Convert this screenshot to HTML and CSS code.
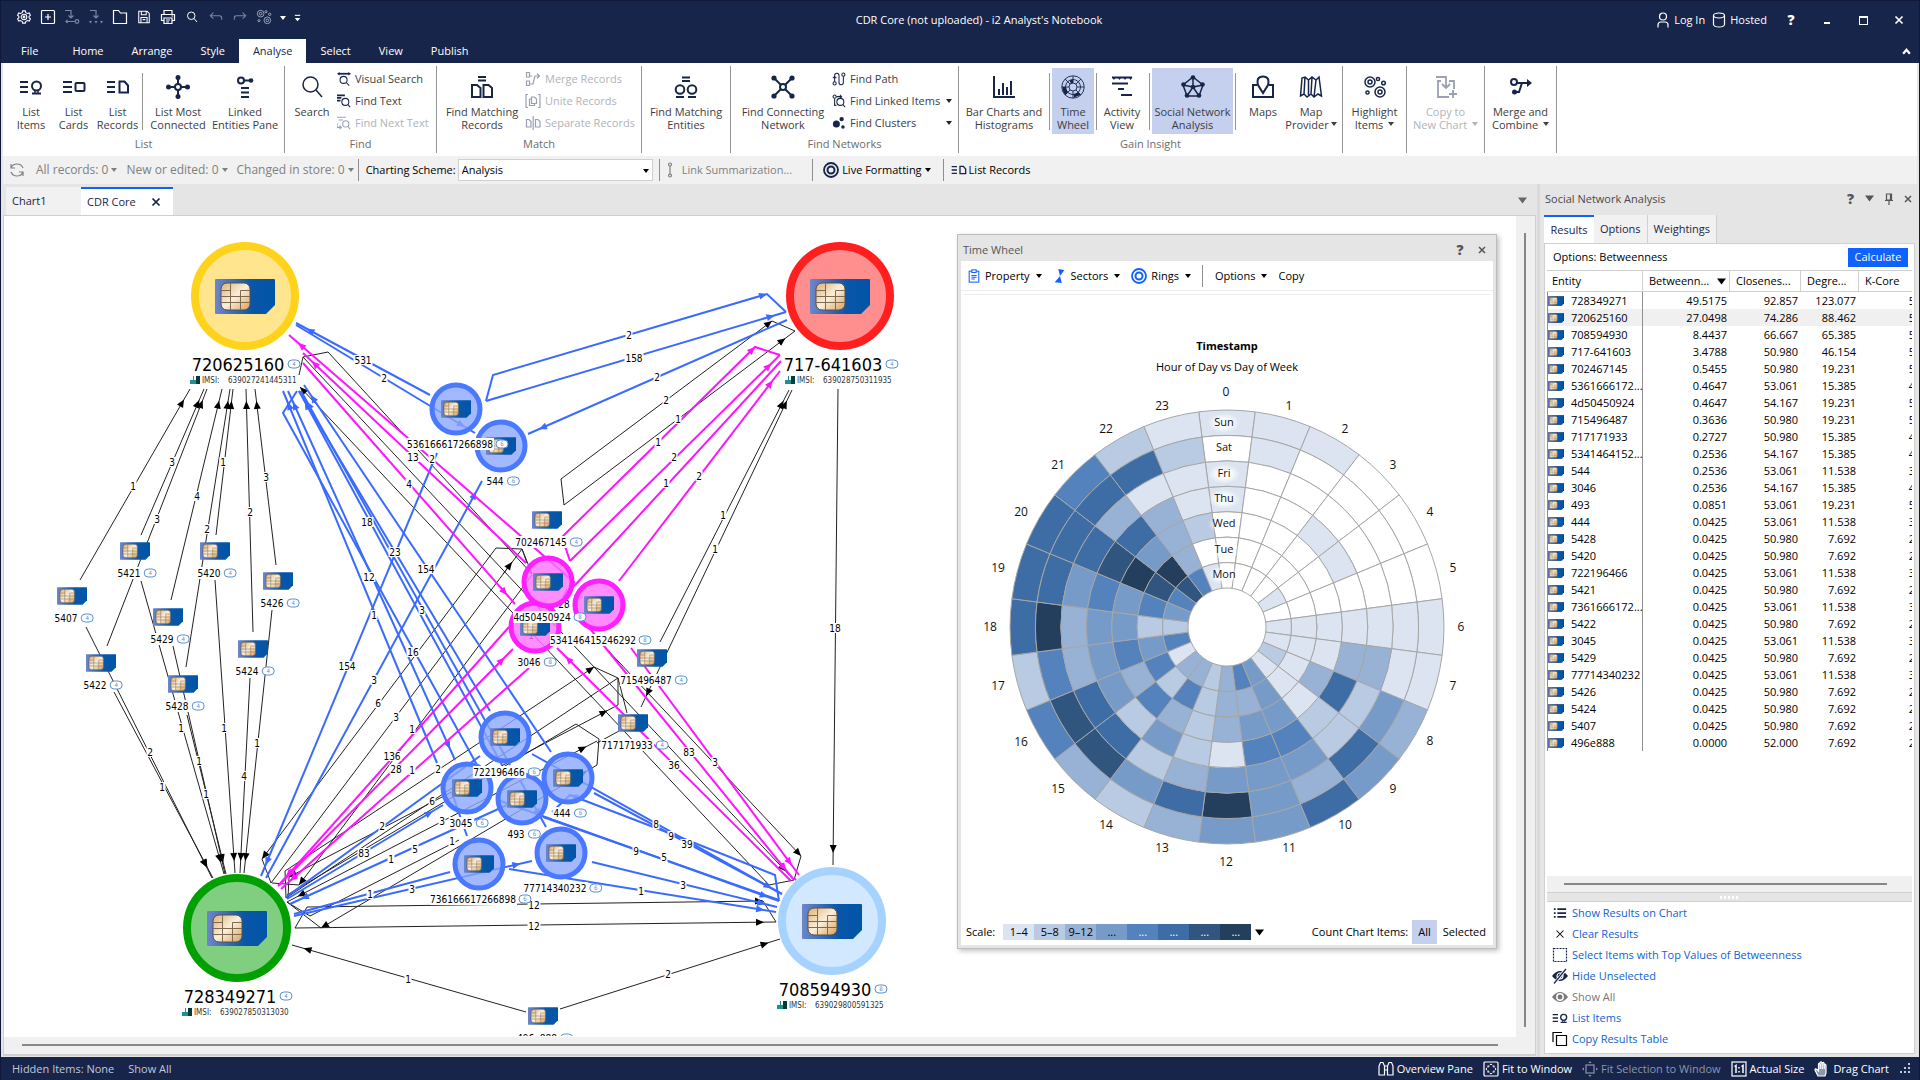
FILE: index.html
```html
<!DOCTYPE html>
<html lang="en">
<head>
<meta charset="utf-8">
<title>CDR Core (not uploaded) - i2 Analyst's Notebook</title>
<link rel="stylesheet" href="styles.css">
</head>
<body>
<svg class="defs" aria-hidden="true">
  <defs>
    <linearGradient id="simBody" x1="0" x2="1" y1="0" y2="0"><stop offset="0" stop-color="#6f86cb"/><stop offset=".6" stop-color="#0a56a8"/><stop offset="1" stop-color="#0055a8"/></linearGradient>
    <linearGradient id="simChip" x1="0" x2="1" y1="0" y2="1"><stop offset="0" stop-color="#e0b070"/><stop offset=".5" stop-color="#fbeedb"/><stop offset="1" stop-color="#d79f58"/></linearGradient>
    <symbol id="sim" viewBox="0 0 60 35"><path d="M0 1Q0 0 1 0H59Q60 0 60 1V26L51 35H1Q0 35 0 34Z" fill="url(#simBody)"/><rect x="6" y="4" width="29" height="27" rx="6" fill="url(#simChip)" stroke="#5c5040" stroke-width="1"/><path d="M6 11.500H15.500M6 17.500H35M6 23.500H35M15.500 4V31M25.500 11.500H35M25.500 11.500V31" fill="none" stroke="#7d6a50" stroke-width="1"/></symbol>
    <radialGradient id="glow"><stop offset="0" stop-color="#fff"/><stop offset=".5" stop-color="#fff" stop-opacity=".8"/><stop offset="1" stop-color="#fff" stop-opacity="0"/></radialGradient>
  </defs>
  <symbol id="caret" viewBox="0 0 6 4"><path d="M0 0H6L3 4Z" fill="currentColor" stroke="none"/></symbol>
  <symbol id="chevron" viewBox="0 0 8 8"><path d="M1 6 4 2.500 7 6" stroke-width="2"/></symbol>
  <symbol id="gear" viewBox="0 0 16 16"><path d="M6.500 1H9.500L10 3 12 4 14 3.400 15.300 6 13.800 7.400V8.800L15.300 10.200 14 12.700 12 12 10 13.200 9.500 15H6.500L6 13.200 4 12 2 12.700.7 10.200 2.200 8.800V7.400L.7 6 2 3.400 4 4 6 3Z"/><circle cx="8" cy="8" r="3.200"/><circle cx="8" cy="8" r="1"/></symbol>
  <symbol id="newdoc" viewBox="0 0 16 16"><rect x="1.500" y="1.500" width="13" height="13" rx="1"/><path d="M8 5V11M5 8H11"/></symbol>
  <symbol id="imp1" viewBox="0 0 16 16"><path d="M1 1.500H7V9M4.500 6.500 7 9 9.500 6.500M2 12.500H11M3.500 11 2 12.500 3.500 14"/><circle cx="13" cy="12.500" r="1.800"/></symbol>
  <symbol id="imp2" viewBox="0 0 16 16"><path d="M2 1.500H8V9M5.500 6.500 8 9 10.500 6.500"/><path d="M1 12H4L2.500 14.500ZM6.500 12H9.500L8 14.500ZM12 12H15L13.500 14.500Z" fill="currentColor" stroke="none"/></symbol>
  <symbol id="folder" viewBox="0 0 16 16"><path d="M1.500 14.500V1.500H6.500L8.500 4H14.500V14.500Z"/></symbol>
  <symbol id="save" viewBox="0 0 16 16"><path d="M2 1.500H11.500L14 4V14.500H2ZM5 1.500V5.500H10.500V1.500M4.500 14.500V8.500H11.500V14.500M6.500 11H9.500"/></symbol>
  <symbol id="print" viewBox="0 0 16 16"><path d="M4 5V1.500H12V5M4 11.500H1.500V5.500H14.500V11.500H12M4 9H12V14.500H4ZM6 11H10M6 13H9M11.500 7H13"/></symbol>
  <symbol id="lens" viewBox="0 0 24 24"><circle cx="10.500" cy="9.500" r="7.500"/><path d="M16 15 22 22"/></symbol>
  <symbol id="undo" viewBox="0 0 16 16"><path d="M5 3 1.500 6.500 5 10M1.500 6.500H12Q14.500 6.500 14.500 9V11"/></symbol>
  <symbol id="redo" viewBox="0 0 16 16"><path d="M11 3 14.500 6.500 11 10M14.500 6.500H4Q1.500 6.500 1.500 9V11"/></symbol>
  <symbol id="hilite" viewBox="0 0 24 24"><circle cx="7" cy="7" r="5"/><circle cx="7" cy="7" r="2"/><circle cx="17" cy="17" r="5"/><circle cx="17" cy="17" r="2"/><circle cx="15" cy="4" r="1.600"/><circle cx="20.500" cy="8" r="1.800"/><circle cx="4.500" cy="17.500" r="1.600"/></symbol>
  <symbol id="more" viewBox="0 0 8 10"><path d="M1 1.500H7"/><path d="M1 4.500H7L4 8Z" fill="currentColor" stroke="none"/></symbol>
  <symbol id="user" viewBox="0 0 14 16"><circle cx="7" cy="4.500" r="3.500"/><path d="M2 15.500V13Q2 10 5 10H9Q12 10 12 13V15.500"/></symbol>
  <symbol id="disk" viewBox="0 0 14 16"><ellipse cx="7" cy="3.500" rx="5.500" ry="2.500"/><path d="M1.500 3.500V12.500Q2 15 7 15T12.500 12.500V3.500"/></symbol>
  <symbol id="litems" viewBox="0 0 24 24"><path d="M1 7H9M1 12H9M1 17H9M13 18.500H22" stroke-width="2"/><circle cx="17.500" cy="11" r="4.500" stroke-width="2"/><path d="M16 15.500V18M19 15.500V18"/></symbol>
  <symbol id="lcards" viewBox="0 0 24 24"><path d="M1 7H10M1 12H10M1 17H10" stroke-width="2"/><rect x="13.500" y="8" width="9" height="8" rx="1" stroke-width="2"/></symbol>
  <symbol id="lrecs" viewBox="0 0 24 24"><path d="M1 7H9M1 12H9M1 17H9M13.500 6.500H18.500L22 10.500V17.500H13.500Z" stroke-width="2"/></symbol>
  <symbol id="most" viewBox="0 0 24 24"><circle cx="12" cy="12" r="3" stroke-width="2"/><path d="M12 3V9M12 15V21M3 12H9M15 12H21" stroke-width="2"/><g fill="currentColor" stroke="none"><circle cx="12" cy="2.500" r="2.500"/><circle cx="12" cy="21.500" r="2.500"/><circle cx="2.500" cy="12" r="2.500"/><circle cx="21.500" cy="12" r="2.500"/></g></symbol>
  <symbol id="linked" viewBox="0 0 24 24"><circle cx="8" cy="5.500" r="3" stroke-width="2"/><path d="M11 5.500H17M8 13H16M8 17.500H16M8 22H16" stroke-width="2"/><circle cx="18" cy="5.500" r="2.300" fill="currentColor" stroke="none"/></symbol>
  <symbol id="vsearch" viewBox="0 0 16 16"><path d="M2 2H14" stroke-width="2"/><circle cx="7.500" cy="9" r="4"/><path d="M10.500 12 14 15.500"/><path d="M0 2 3 0V4ZM16 2 13 0V4Z" fill="currentColor" stroke="none"/></symbol>
  <symbol id="ftext" viewBox="0 0 16 16"><path d="M0 1.500H9M0 4.500H5M0 7.500H4" stroke-width="2"/><circle cx="9.500" cy="9" r="4"/><path d="M12.500 12 15 15"/></symbol>
  <symbol id="fnext" viewBox="0 0 16 16"><path d="M0 1.500H10M2 4.500H7M0 8V13H5M3 11 5 13 3 15"/><circle cx="10" cy="9" r="3.500"/><path d="M12.500 12 15 15"/></symbol>
  <symbol id="mrecs" viewBox="0 0 24 24"><path d="M8 2H16M8 5.500H16M2 10H7L10.500 13V22H2ZM13.500 10H18.500L22 13V22H13.500Z" stroke-width="2"/></symbol>
  <symbol id="ments" viewBox="0 0 24 24"><path d="M8 2.500H16M8 6H16M2 22H10M14 22H22" stroke-width="2"/><circle cx="6" cy="14.500" r="4.300" stroke-width="2"/><circle cx="18" cy="14.500" r="4.300" stroke-width="2"/></symbol>
  <symbol id="merge" viewBox="0 0 16 16"><path d="M1.500 1.500H4.500V6H1.500ZM1.500 10H4.500V14.500H1.500ZM5 13H8L10 5H14M5 5H7M12 2.500 14.500 5 12 7.500"/></symbol>
  <symbol id="unite" viewBox="0 0 16 16"><path d="M3 1.500H1V14.500H3M13 1.500H15V14.500H13M6.500 4H9.500L11.500 6V10.500H6.500ZM6.500 6H4.500V12.500H9.500V10.500"/></symbol>
  <symbol id="separate" viewBox="0 0 16 16"><path d="M1.500 4.500H4L6 6.500V12H1.500ZM10.500 4.500H13L15 6.500V12H10.500ZM8.200 1V15"/></symbol>
  <symbol id="connect" viewBox="0 0 24 24"><circle cx="12" cy="12" r="3" stroke-width="2"/><path d="M3 3 10 10M21 3 14 10M3 21 10 14M21 21 14 14" stroke-width="2"/><g fill="currentColor" stroke="none"><circle cx="3" cy="3" r="2.600"/><circle cx="21" cy="3" r="2.600"/><circle cx="3" cy="21" r="2.600"/><circle cx="21" cy="21" r="2.600"/></g></symbol>
  <symbol id="path" viewBox="0 0 16 16"><circle cx="3" cy="13" r="1.800"/><circle cx="13" cy="3" r="1.800"/><path d="M3 11V4Q3 1.500 5.500 1.500T8 4V12Q8 14.500 10.500 14.500T13 12V5M1 7 3 5 5 7"/></symbol>
  <symbol id="flinked" viewBox="0 0 16 16"><circle cx="3" cy="3" r="1.800"/><circle cx="9.500" cy="9" r="4"/><path d="M12.500 12 15 15M5 3H11M9 1 11 3 9 5M3 5V13H5"/></symbol>
  <symbol id="clusters" viewBox="0 0 16 16"><g fill="currentColor" stroke="none"><circle cx="5" cy="9" r="4"/><circle cx="11" cy="3.500" r="2.500"/><circle cx="12.500" cy="12.500" r="2"/></g></symbol>
  <symbol id="bars" viewBox="0 0 24 24"><path d="M2 1V22H23" stroke-width="2"/><path d="M7 20V14M11 20V8M15 20V12M19 20V6" stroke-width="2"/></symbol>
  <symbol id="wheel" viewBox="0 0 24 24"><g stroke-width=".9"><circle cx="12" cy="12" r="11.200"/><circle cx="12" cy="12" r="7.500"/><circle cx="12" cy="12" r="4"/><path d="M12 1V8M12 16V23M1 12H8M16 12H23M4 4 9 9M15 15 20 20M20 4 15 9M9 15 4 20"/></g><path d="M8.500 5.500 12 4.500V8L10 8.500ZM1.500 12H4.500L7 17.500 4.500 20Q1.500 17 1.500 12ZM12.500 19.500 17.500 17 19.500 20 13 22.500Z" fill="currentColor" stroke="none"/></symbol>
  <symbol id="activity" viewBox="0 0 24 24"><path d="M2 8.500H18M8 14H14M11 20H22M2 2.500H22" stroke-width="2"/><path d="M2 2H6L4 5ZM7.500 2H11.500L9.500 5ZM13 2H17L15 5ZM18.500 2H22.500L20.500 5Z" fill="currentColor" stroke="none"/></symbol>
  <symbol id="social" viewBox="0 0 24 24"><path d="M12 2 22 10 18 21H6L2 10ZM12 2V12L22 10M12 12 18 21M12 12 6 21M12 12 2 10"/><g fill="currentColor" stroke="none"><circle cx="12" cy="2.500" r="2.300"/><circle cx="21.500" cy="9.500" r="2.300"/><circle cx="18" cy="20.500" r="2.300"/><circle cx="6" cy="20.500" r="2.300"/><circle cx="2.500" cy="9.500" r="2.300"/><circle cx="12" cy="12" r="2.300"/></g></symbol>
  <symbol id="maps" viewBox="0 0 24 24"><path d="M12 18 7 10Q5 1.500 12 1.500T17 10ZM6 10H2V22H22V10H18" stroke-width="2"/></symbol>
  <symbol id="mapprov" viewBox="0 0 24 24"><path d="M1.500 21 3 3 6 2 9.500 5 13 2 17 5 20 2 22.500 21 19 19 15 22 12 19 8 22 5 19ZM6 2 5 19M9.500 5V21M13 2 12 19M17 5 15 22" stroke-width="1.500"/></symbol>
  <symbol id="copynew" viewBox="0 0 24 24"><path d="M2 2H12V13M8 9 12 13 16 9M7 6H4V22H15M15 6H20V14M19 15V23M15 19H23" stroke-width="1.800"/></symbol>
  <symbol id="combine" viewBox="0 0 24 24"><circle cx="5" cy="7" r="3" stroke-width="2"/><path d="M8 8H21M7 17H10L13 8" stroke-width="2"/><path d="M18 4 23 8 18 12Z" fill="currentColor" stroke="none"/><circle cx="5.500" cy="17" r="2.500" fill="currentColor" stroke="none"/></symbol>
  <symbol id="refresh" viewBox="0 0 16 16"><path d="M2 6Q3.500 2 8 2T14 6M2 2V6H6M14 10Q12.500 14 8 14T2 10M14 14V10H10"/></symbol>
  <symbol id="linksum" viewBox="0 0 6 16"><circle cx="3" cy="2.500" r="1.500"/><path d="M3 4V13"/><circle cx="3" cy="13.500" r="1.500"/></symbol>
  <symbol id="target" viewBox="0 0 16 16"><circle cx="8" cy="8" r="7" stroke-width="1.800"/><circle cx="8" cy="8" r="3.500" stroke-width="2"/></symbol>
  <symbol id="pin" viewBox="0 0 12 12"><path d="M3.500 1H8.500V7H3.500ZM7.500 1V7M2 7.500H10M6 8V12"/></symbol>
  <symbol id="clip" viewBox="0 0 14 16"><rect x="1.500" y="2.500" width="11" height="12.500"/><rect x="4.500" y="1" width="5" height="3" fill="#fff"/><path d="M4 7.500H10M4 9.500H10M4 11.500H8"/></symbol>
  <symbol id="sector" viewBox="0 0 14 16"><path d="M5 0 12 1 7 8 9 16 1 15 7 8Z" fill="currentColor" stroke="none"/></symbol>
  <symbol id="results" viewBox="0 0 16 16"><path d="M1 3.500H3M5 3.500H15M1 8H3M5 8H15M1 12.500H3M5 12.500H15" stroke-width="2"/></symbol>
  <symbol id="cross" viewBox="0 0 16 16"><path d="M4 4 12 12M12 4 4 12"/></symbol>
  <symbol id="marquee" viewBox="0 0 16 16"><rect x="1.500" y="1.500" width="13" height="13" stroke-dasharray="2 1"/></symbol>
  <symbol id="hide" viewBox="0 0 16 16"><path d="M0 8Q8-2 16 8 8 18 0 8Z" fill="currentColor" stroke="none"/><circle cx="8" cy="8" r="3" fill="none" stroke="#fff"/><path d="M2 16 14 1" stroke="#fff" stroke-width="3"/><path d="M2 15.500 14 1"/></symbol>
  <symbol id="eye" viewBox="0 0 16 16"><path d="M0 8Q8-2 16 8 8 18 0 8Z" fill="currentColor" stroke="none"/><circle cx="8" cy="8" r="3.200" fill="none" stroke="#fff" stroke-width="1.500"/></symbol>
  <symbol id="copy" viewBox="0 0 16 16"><path d="M1 11V1.500H10M4.500 4.500H14.500V14.500H4.500Z"/></symbol>
  <symbol id="binoc" viewBox="0 0 16 16"><path d="M1 14V5L2.500 1.500H5L6.500 5V14ZM9.500 14V5L11 1.500H13.500L15 5V14ZM6.500 5H9.500M6.500 9H9.500"/></symbol>
  <symbol id="fitwin" viewBox="0 0 16 16"><rect x="1" y="1" width="14" height="14" rx="1"/><path d="M5 6.500V5H6.500M9.500 5H11V6.500M11 9.500V11H9.500M6.500 11H5V9.500"/><path d="M8 2.500 9.500 4H6.500ZM8 13.500 9.500 12H6.500ZM2.500 8 4 6.500V9.500ZM13.500 8 12 6.500V9.500Z" fill="currentColor" stroke="none"/></symbol>
  <symbol id="fitsel" viewBox="0 0 16 16"><rect x="4" y="4" width="8" height="8"/><path d="M8 0 9.500 2H6.500ZM8 16 9.500 14H6.500ZM0 8 2 6.500V9.500ZM16 8 14 6.500V9.500Z" fill="currentColor" stroke="none"/></symbol>
  <symbol id="actual" viewBox="0 0 16 16"><rect x="1" y="1" width="14" height="14"/><path d="M3.500 5.500 5 4.500V12M10.500 5.500 12 4.500V12M8 6V7.500M8 10V11.500" stroke-width="1.500"/></symbol>
  <symbol id="hand" viewBox="0 0 16 16"><path d="M4 15 1 9Q1 7 3 8.500L4.500 10V3Q5 1.500 6 3V1.500Q7 0 8 1.500V2Q9.500.5 10 2.500V3.500Q11.500 2.500 12 4.500V12L11 15Z" fill="#8d96ad"/><path d="M6.200 3V8M8.200 2V8M10.200 3.500V8"/></symbol>
  <symbol id="grip" viewBox="0 0 12 12"><path d="M9 0H11V2H9ZM9 4H11V6H9ZM9 8H11V10H9ZM5 4H7V6H5ZM5 8H7V10H5ZM1 8H3V10H1Z" fill="currentColor" stroke="none"/></symbol>
</svg>

<header class="titlebar">
  <div class="title-row">
    <div class="qat">
      <button class="qbtn" aria-label="Settings"><svg class="i14"><use href="#gear"/></svg></button>
      <button class="qbtn" aria-label="New"><svg class="i16"><use href="#newdoc"/></svg></button>
      <button class="qbtn dim" aria-label="Import links"><svg class="i16"><use href="#imp1"/></svg></button>
      <button class="qbtn dim" aria-label="Import items"><svg class="i16"><use href="#imp2"/></svg></button>
      <button class="qbtn" aria-label="Open"><svg class="i16"><use href="#folder"/></svg></button>
      <button class="qbtn" aria-label="Save"><svg class="i14"><use href="#save"/></svg></button>
      <button class="qbtn" aria-label="Print"><svg class="i16"><use href="#print"/></svg></button>
      <button class="qbtn" aria-label="Search"><svg class="i12 thick2"><use href="#lens"/></svg></button>
      <button class="qbtn dim" aria-label="Undo"><svg class="i14"><use href="#undo"/></svg></button>
      <button class="qbtn dim" aria-label="Redo"><svg class="i14"><use href="#redo"/></svg></button>
      <button class="qbtn soft" aria-label="Highlight"><svg class="i16"><use href="#hilite"/></svg></button>
      <button class="qbtn slim" aria-label="Highlight options"><svg class="i6"><use href="#caret"/></svg></button>
      <button class="qbtn slim" aria-label="Customise"><svg class="i8"><use href="#more"/></svg></button>
    </div>
    <h1 class="app-title">CDR Core (not uploaded) - i2 Analyst's Notebook</h1>
    <div class="win-tools">
      <button class="wtext"><svg class="i16"><use href="#user"/></svg>Log In</button>
      <button class="wtext"><svg class="i16"><use href="#disk"/></svg>Hosted</button>
      <button class="wbtn bold">?</button>
      <button class="wbtn" aria-label="Minimise"><span class="g-min"></span></button>
      <button class="wbtn" aria-label="Maximise"><span class="g-max"></span></button>
      <button class="wbtn" aria-label="Close"><svg class="i14 thick2"><use href="#cross"/></svg></button>
    </div>
  </div>
  <nav class="menu">
    <button class="mtab first">File</button><button class="mtab">Home</button><button class="mtab">Arrange</button><button class="mtab">Style</button><button class="mtab on">Analyse</button><button class="mtab">Select</button><button class="mtab">View</button><button class="mtab">Publish</button>
    <button class="collapse" aria-label="Collapse ribbon"><svg class="i8"><use href="#chevron"/></svg></button>
  </nav>
</header>

<section class="ribbon">
  <div class="grp g-list"><div class="tools">
    <button class="big"><svg class="i24"><use href="#litems"/></svg><span>List<br>Items</span></button>
    <button class="big"><svg class="i24"><use href="#lcards"/></svg><span>List<br>Cards</span></button>
    <button class="big"><svg class="i24"><use href="#lrecs"/></svg><span>List<br>Records</span></button>
    <i class="rsep"></i>
    <button class="big"><svg class="i24"><use href="#most"/></svg><span>List Most<br>Connected</span></button>
    <button class="big"><svg class="i24"><use href="#linked"/></svg><span>Linked<br>Entities Pane</span></button>
  </div><h2>List</h2></div>
  <div class="grp g-find"><div class="tools">
    <button class="big"><svg class="i24"><use href="#lens"/></svg><span>Search</span></button>
    <div class="smalls">
      <button class="small"><svg class="i14"><use href="#vsearch"/></svg>Visual Search</button>
      <button class="small"><svg class="i14"><use href="#ftext"/></svg>Find Text</button>
      <button class="small" disabled><svg class="i14"><use href="#fnext"/></svg>Find Next Text</button>
    </div>
  </div><h2>Find</h2></div>
  <div class="grp g-match"><div class="tools">
    <button class="big"><svg class="i24"><use href="#mrecs"/></svg><span>Find Matching<br>Records</span></button>
    <div class="smalls">
      <button class="small" disabled><svg class="i16"><use href="#merge"/></svg>Merge Records</button>
      <button class="small" disabled><svg class="i16"><use href="#unite"/></svg>Unite Records</button>
      <button class="small" disabled><svg class="i16"><use href="#separate"/></svg>Separate Records</button>
    </div>
  </div><h2>Match</h2></div>
  <div class="grp g-ents"><div class="tools">
    <button class="big"><svg class="i24"><use href="#ments"/></svg><span>Find Matching<br>Entities</span></button>
  </div></div>
  <div class="grp g-net"><div class="tools">
    <button class="big"><svg class="i24"><use href="#connect"/></svg><span>Find Connecting<br>Network</span></button>
    <div class="smalls">
      <button class="small"><svg class="i14"><use href="#path"/></svg>Find Path</button>
      <button class="small"><svg class="i14"><use href="#flinked"/></svg>Find Linked Items<svg class="i6 push"><use href="#caret"/></svg></button>
      <button class="small"><svg class="i14"><use href="#clusters"/></svg>Find Clusters<svg class="i6 push"><use href="#caret"/></svg></button>
    </div>
  </div><h2>Find Networks</h2></div>
  <div class="grp g-gain"><div class="tools">
    <button class="big"><svg class="i24"><use href="#bars"/></svg><span>Bar Charts and<br>Histograms</span></button>
    <i class="rsep"></i>
    <button class="big on"><svg class="i24"><use href="#wheel"/></svg><span>Time<br>Wheel</span></button>
    <i class="rsep"></i>
    <button class="big"><svg class="i24"><use href="#activity"/></svg><span>Activity<br>View</span></button>
    <i class="rsep"></i>
    <button class="big on"><svg class="i24"><use href="#social"/></svg><span>Social Network<br>Analysis</span></button>
    <i class="rsep"></i>
    <button class="big"><svg class="i24"><use href="#maps"/></svg><span>Maps</span></button>
    <button class="big"><svg class="i24"><use href="#mapprov"/></svg><span>Map<br>Provider<svg class="i6 in"><use href="#caret"/></svg></span></button>
  </div><h2>Gain Insight</h2></div>
  <div class="grp g-hi"><div class="tools"><button class="big"><svg class="i24"><use href="#hilite"/></svg><span>Highlight<br>Items <svg class="i6 in"><use href="#caret"/></svg></span></button></div></div>
  <div class="grp g-copy"><div class="tools"><button class="big" disabled><svg class="i24"><use href="#copynew"/></svg><span>Copy to<br>New Chart <svg class="i6 in"><use href="#caret"/></svg></span></button></div></div>
  <div class="grp g-merge"><div class="tools"><button class="big"><svg class="i24"><use href="#combine"/></svg><span>Merge and<br>Combine <svg class="i6 in"><use href="#caret"/></svg></span></button></div></div>
</section>

<section class="recordbar">
  <button class="rb grey r-ref" aria-label="Refresh"><svg class="i16"><use href="#refresh"/></svg></button>
  <button class="rb grey wide">All records: 0<svg class="i6"><use href="#caret"/></svg></button>
  <button class="rb grey wide">New or edited: 0<svg class="i6"><use href="#caret"/></svg></button>
  <button class="rb grey wide r-chg">Changed in store: 0<svg class="i6"><use href="#caret"/></svg></button>
  <i class="tsep"></i>
  <label class="rlabel" for="scheme">Charting Scheme:</label>
  <span class="selwrap"><select id="scheme"><option>Analysis</option></select><svg class="i6"><use href="#caret"/></svg></span>
  <i class="tsep"></i>
  <button class="rb grey r-sum"><svg class="i16 narrow"><use href="#linksum"/></svg>Link Summarization...</button>
  <i class="tsep"></i>
  <button class="rb r-live"><svg class="i16 navy"><use href="#target"/></svg>Live Formatting<svg class="i6"><use href="#caret"/></svg></button>
  <i class="tsep"></i>
  <button class="rb r-rec"><svg class="i16 navy"><use href="#lrecs"/></svg>List Records</button>
</section>

<main class="work">
  <section class="docs">
    <div class="doctabs">
      <button class="dtab">Chart1</button>
      <button class="dtab on">CDR Core<svg class="i14 thick2"><use href="#cross"/></svg></button>
      <button class="dmenu" aria-label="Open charts"><svg class="i8"><use href="#caret"/></svg></button>
    </div>
    <div class="chart">
      <div class="canvas">
        <svg class="graph" id="graph" width="1512" height="820" viewBox="4 216 1512 820" role="img" aria-label="Call record link chart"></svg>
        <section class="wheelwin">
          <div class="wtitle"><span>Time Wheel</span><button class="pbtn bold">?</button><button class="pbtn" aria-label="Close"><svg class="i12 thick2"><use href="#cross"/></svg></button></div>
          <div class="wbody">
            <div class="wtools">
              <button class="wt"><svg class="i14 blue"><use href="#clip"/></svg>Property<svg class="i6"><use href="#caret"/></svg></button>
              <button class="wt"><svg class="i14 blue"><use href="#sector"/></svg>Sectors<svg class="i6"><use href="#caret"/></svg></button>
              <button class="wt"><svg class="i16 blue"><use href="#target"/></svg>Rings<svg class="i6"><use href="#caret"/></svg></button>
              <i class="tsep"></i>
              <button class="wt">Options<svg class="i6"><use href="#caret"/></svg></button>
              <button class="wt">Copy</button>
            </div>
            <div class="wchart">
              <h3>Timestamp</h3>
              <p>Hour of Day vs Day of Week</p>
              <svg id="wheelplot" width="500" height="500" viewBox="-250 -250 500 500" role="img" aria-label="Hour of day against day of week"></svg>
            </div>
            <div class="wfoot">
              <span class="flabel">Scale:</span>
              <ol class="scale"><li class="s1">1–4</li><li class="s2">5–8</li><li class="s3">9–12</li><li class="s4">...</li><li class="s5">...</li><li class="s6">...</li><li class="s7">...</li><li class="s8">...</li></ol>
              <button class="pbtn slimb" aria-label="Scale options"><svg class="i8"><use href="#caret"/></svg></button>
              <span class="flabel push">Count Chart Items:</span>
              <button class="fopt on">All</button><button class="fopt">Selected</button>
            </div>
          </div>
        </section>
      </div>
      <div class="vscroll"><i></i></div>
      <div class="hscroll"><i></i></div>
    </div>
  </section>

  <aside class="sna">
    <div class="ptitle"><h2>Social Network Analysis</h2><button class="pbtn bold">?</button><button class="pbtn" aria-label="Menu"><svg class="i8"><use href="#caret"/></svg></button><button class="pbtn" aria-label="Pin"><svg class="i12"><use href="#pin"/></svg></button><button class="pbtn" aria-label="Close"><svg class="i12 thick2"><use href="#cross"/></svg></button></div>
    <div class="ptabs"><button class="ptab on">Results</button><button class="ptab">Options</button><button class="ptab">Weightings</button></div>
    <div class="pbody">
      <div class="prow"><span>Options: Betweenness</span><button class="calc">Calculate</button></div>
      <div class="tablebox">
        <table class="res">
          <colgroup><col class="c1"><col class="c2"><col class="c3"><col class="c4"><col class="c5"></colgroup>
          <thead><tr><th>Entity</th><th class="sorted">Betweenn...<svg class="i8"><use href="#caret"/></svg></th><th>Closenes...</th><th>Degre...</th><th>K-Core</th></tr></thead>
          <tbody id="rows"></tbody>
        </table>
      </div>
      <div class="phscroll"><i></i></div>
      <div class="split"><i></i></div>
      <ul class="links">
        <li><svg class="i14 navy"><use href="#results"/></svg><a href="#">Show Results on Chart</a></li>
        <li><svg class="i14"><use href="#cross"/></svg><a href="#">Clear Results</a></li>
        <li><svg class="i16 navy"><use href="#marquee"/></svg><a href="#">Select Items with Top Values of Betweenness</a></li>
        <li><svg class="i16 navy"><use href="#hide"/></svg><a href="#">Hide Unselected</a></li>
        <li class="off"><svg class="i16"><use href="#eye"/></svg><span>Show All</span></li>
        <li><svg class="i16 navy"><use href="#litems"/></svg><a href="#">List Items</a></li>
        <li><svg class="i16"><use href="#copy"/></svg><a href="#">Copy Results Table</a></li>
      </ul>
    </div>
  </aside>
</main>

<footer class="status">
  <span>Hidden Items: None</span><button class="sb plain">Show All</button>
  <div class="sright">
    <button class="sb lit"><svg class="i16"><use href="#binoc"/></svg>Overview Pane</button>
    <button class="sb lit"><svg class="i16"><use href="#fitwin"/></svg>Fit to Window</button>
    <button class="sb" disabled><svg class="i16"><use href="#fitsel"/></svg>Fit Selection to Window</button>
    <button class="sb lit"><svg class="i16"><use href="#actual"/></svg>Actual Size</button>
    <button class="sb lit"><svg class="i16"><use href="#hand"/></svg>Drag Chart</button>
    <svg class="i12 grip"><use href="#grip"/></svg>
  </div>
</footer>
<script src="app.js"></script>
</body>
</html>
```
FILE: styles.css
```css
* { box-sizing: border-box; }
body { margin: 0; height: 100vh; display: flex; flex-direction: column; border: solid #10193a; border-width: 0 1px; font: 11px/14px "Open Sans", "Noto Sans", sans-serif; color: #000; background: #e5e5e5; overflow: hidden; }
button { font: inherit; color: inherit; background: none; border: 0; padding: 0; margin: 0; white-space: nowrap; }
h1, h2, h3, p, ul, ol { margin: 0; padding: 0; font: inherit; }
ul, ol { list-style: none; }
.defs { position: absolute; width: 0; height: 0; }
svg { flex: none; fill: none; stroke: currentColor; stroke-width: 1.2; }
.i6 { width: 6px; height: 6px; stroke: none; }
.i8 { width: 9px; height: 9px; }
.i12 { width: 12px; height: 12px; }
.i14 { width: 14px; height: 14px; }
.i16 { width: 16px; height: 16px; }
.i24 { width: 24px; height: 24px; }
.narrow { width: 6px; }
.thick2 { stroke-width: 2; }
.blue { color: #1062ff; }
.navy { color: #18254a; }
.push { margin-left: auto; }
.bold { font-weight: 800; font-size: 14px; }

.titlebar { background: #18254a; color: #fff; border-top: 1px solid #10193a; }
.title-row { height: 38px; display: grid; grid-template-columns: 1fr auto 1fr; align-items: center; }
.qat { display: flex; padding: 0 0 6px 11px; }
.qbtn { width: 24px; height: 20px; display: flex; align-items: center; justify-content: center; }
.qbtn.slim { width: 14px; padding-top: 2px; }
.dim { color: #7c87a3; }
.soft { color: #b4bccd; }
.app-title { padding-left: 38px; }
.win-tools { display: flex; justify-content: flex-end; align-items: center; padding-right: 2px; }
.wtext { display: flex; align-items: center; gap: 3px; margin-right: 6px; }
.wbtn { width: 36px; height: 20px; display: flex; align-items: center; justify-content: center; }
.g-min { width: 6px; height: 2px; background: #fff; margin-top: 6px; }
.g-max { width: 9px; height: 9px; border: 1px solid #fff; border-top-width: 2px; }
.menu { height: 24px; display: flex; padding-left: 6px; }
.mtab { padding: 0 14px; }
.mtab.first { margin-right: 6px; }
.mtab.on { background: #fff; color: #18254a; }
.collapse { margin-left: auto; width: 24px; padding-right: 2px; display: flex; justify-content: center; align-items: center; }

.ribbon { display: flex; background: #fff; height: 93px; margin: 0 2px; padding: 3px 0; }
.grp { display: flex; flex-direction: column; justify-content: space-between; border-right: 1px solid #969696; color: #3c4043; }
.grp h2 { text-align: center; color: #6d6d6d; line-height: 18px; }
.tools { display: grid; padding-top: 2px; }
.big { height: 66px; display: flex; flex-direction: column; align-items: center; padding-top: 7px; gap: 6px; line-height: 13px; }
.big svg.i24 { color: #18254a; stroke-width: 1.5; }
.big.on { background: #c5cfee; }
.big:disabled, .small:disabled { color: #b0b3b8; }
.big:disabled svg.i24, .small:disabled svg { color: #9aa0b4; }
.in { margin-left: 2px; vertical-align: 2px; }
.rsep { width: 1px; height: 57px; margin: 5px auto 0; background: #969696; }
.smalls { display: grid; grid-auto-rows: 22px; }
.small { display: flex; align-items: center; gap: 4px; }
.small svg { color: #18254a; }
.g-list .tools { grid-template-columns: 42px 43px 45px 4px 68px 66px; padding-left: 7px; padding-right: 6px; }
.g-find .tools { grid-template-columns: 50px 99px; padding-left: 2px; }
.g-match .tools { grid-template-columns: 86px 116px; padding-left: 2px; }
.g-ents .tools { grid-template-columns: 88px; }
.g-net .tools { grid-template-columns: 98px 120px; padding-left: 3px; padding-right: 6px; }
.g-gain .tools { grid-template-columns: 84px 6px 42px 4px 48px 6px 81px 4px 52px 44px; padding-left: 3px; padding-right: 9px; }
.g-hi .tools { grid-template-columns: 63px; }
.g-copy .tools { grid-template-columns: 77px; }
.g-merge .tools { grid-template-columns: 71px; }

.recordbar { display: flex; align-items: center; height: 28px; background: #f1f1f1; padding-left: 6px; margin: 0 2px; }
.rb { display: flex; align-items: center; gap: 5px; margin-right: 11px; }
.wide { font-size: 12px; gap: 3px; margin-right: 9px; }
.grey { color: #808080; }
.tsep { width: 1px; height: 22px; background: #8f8f8f; margin-right: 7px; }
.r-chg { margin-right: 4px; }
.rlabel { margin-right: 2px; }
.selwrap { position: relative; width: 195px; margin-right: 6px; }
.selwrap select { width: 100%; height: 22px; appearance: none; border: 1px solid #d0d0d0; border-radius: 0; background: #fff; font: inherit; padding: 0 3px; color: #000; }
.selwrap svg { position: absolute; right: 4px; top: 9px; }
.r-sum { gap: 9px; margin-right: 20px; }
.r-live { padding-left: 3px; gap: 3px; margin-right: 12px; }
.r-rec { gap: 2px; }

.work { flex: 1; min-height: 0; display: flex; margin: 0 2px; }
.docs { flex: 1; min-width: 0; display: flex; flex-direction: column; }
.doctabs { display: flex; height: 31px; padding: 3px 0 0 3px; }
.dtab { width: 75px; padding-left: 6px; text-align: left; background: #f1f1f1; color: #18254a; }
.dtab.on { width: 92px; background: #fff; border-top: 2px solid #1062ff; display: flex; align-items: center; justify-content: space-between; padding-right: 10px; }
.dmenu { margin-left: auto; padding-right: 9px; color: #666; }
.chart { flex: 1; min-height: 0; display: grid; grid-template: minmax(0, 1fr) 17px / minmax(0, 1fr) 19px; background: #f0f0f0; border: 1px solid #cfcfcf; border-bottom-width: 2px; margin-bottom: 1px; }
.canvas { position: relative; overflow: hidden; background: #fff; }
.graph { display: block; }
.vscroll { padding: 17px 9px 10px 8px; display: flex; }
.vscroll i { width: 2px; background: #878787; }
.hscroll { padding: 7px 18px 8px; }
.hscroll i { display: block; height: 2px; background: #878787; }
.graph text { stroke: none; fill: #000; font: 10px "DejaVu Sans Condensed", "DejaVu Sans", sans-serif; text-anchor: middle; }
.graph .lbig { font-size: 18px; }
.graph .limsi { font-size: 8px; fill: #333; text-anchor: start; }
.graph .badge { font-size: 6px; fill: #5b8fd0; }
.ln-k { stroke: #222; stroke-width: 1; fill: none; }
.ln-b { stroke: #3a6bff; stroke-width: 2; fill: none; }
.ln-m { stroke: #ff14ff; stroke-width: 2; fill: none; }
.ar-k { fill: #000; stroke: none; }
.ar-b { fill: #3a6bff; stroke: none; }
.ar-m { fill: #ff14ff; stroke: none; }
.plate { fill: #fff; stroke: none; }

.wheelwin { position: absolute; left: 953px; top: 18px; width: 540px; height: 715px; background: #e5e5e5; border: 1px solid #bdbdbd; box-shadow: 2px 2px 5px rgba(0, 0, 0, .25); display: flex; flex-direction: column; padding: 0 3px 3px; }
.wtitle { display: flex; align-items: center; height: 26px; color: #555; padding: 4px 0 0 2px; }
.wtitle span { flex: 1; }
.pbtn { width: 22px; color: #555; display: flex; align-items: center; justify-content: center; }
.wbody { flex: 1; background: #fff; display: flex; flex-direction: column; min-height: 0; }
.wtools { height: 30px; display: flex; align-items: center; padding-left: 6px; border-bottom: 1px solid #ededed; }
.wt { display: flex; align-items: center; gap: 4px; margin-right: 11px; }
.wt svg:last-child { margin-left: 2px; }
.wtools .tsep { margin-right: 12px; }
.wchart { flex: 1; min-height: 0; margin: 3px 3px 0; border-top: 1px solid #ededed; display: flex; flex-direction: column; align-items: center; padding-top: 43px; }
.wchart h3 { font-weight: 700; line-height: 16px; }
.wchart p { line-height: 16px; padding-top: 5px; }
#wheelplot { margin-top: 2px; overflow: visible; }
#wheelplot text { stroke: none; fill: #111; text-anchor: middle; }
#wheelplot .hour { font-size: 12px; }
.cell { stroke: #a6a6a6; stroke-width: 1; }
.wfoot { display: flex; align-items: center; height: 26px; padding: 0 0 0 5px; }
.flabel { margin-right: 6px; }
.scale { display: flex; margin-left: 2px; }
.scale li { width: 31px; height: 16px; text-align: center; line-height: 16px; }
.s1 { background: #dbe4f0; } .s2 { background: #b9cae3; } .s3 { background: #98b2d6; } .s4 { background: #769bc8; }
.s5 { background: #5382bd; color: #fff; } .s6 { background: #3e6ca5; color: #fff; } .s7 { background: #30557f; color: #fff; } .s8 { background: #243f5e; color: #fff; }
.slimb { width: 16px; color: #000; }
.push.flabel { margin-right: 4px; }
.fopt { height: 24px; padding: 0 5px; margin-right: 1px; }
.fopt.on { background: #c5cfee; padding: 0 6px; }
.wfoot .fopt:last-child { margin-right: 2px; }

.sna { width: 380px; flex: none; display: flex; flex-direction: column; margin-left: 1px; border-left: 3px solid #dadada; padding-left: 4px; }
.ptitle { display: flex; align-items: center; height: 31px; padding-bottom: 2px; color: #4a4a4a; }
.ptitle h2 { flex: 1; padding-left: 1px; }
.ptitle .pbtn { width: 19px; }
.ptabs { display: flex; height: 28px; }
.ptab { padding: 0 6px; min-width: 50px; background: #f1f1f1; color: #18254a; border-right: 1px solid #d0d0d0; }
.ptab.on { padding: 0 4px; background: #fff; border-top: 2px solid #1062ff; border-right: 0; }
.pbody { flex: 1; min-height: 0; background: #fff; border: 1px solid #d0d0d0; margin: 0 2px 3px 0; padding: 0 2px; display: flex; flex-direction: column; }
.prow { display: flex; align-items: center; justify-content: space-between; height: 26px; padding: 0 4px 0 6px; }
.calc { background: #1062ff; color: #fff; height: 19px; width: 60px; }
.tablebox { flex: 1; min-height: 0; overflow: hidden; border-top: 1px solid #d0d0d0; }
.res { table-layout: fixed; width: 372px; border-collapse: separate; border-spacing: 0; }
.c1 { width: 96px; } .c2 { width: 87px; } .c3 { width: 71px; } .c4 { width: 58px; } .c5 { width: 60px; }
.res th { font-weight: 400; text-align: left; height: 21px; padding: 0 0 0 6px; border-right: 1px solid #d0d0d0; border-bottom: 1px solid #d0d0d0; white-space: nowrap; }
.res th:first-child { padding-left: 5px; }
.res th.sorted svg { margin-left: 8px; vertical-align: -1px; }
.res td { height: 17px; padding: 0 3px 0 0; text-align: right; line-height: 17px; white-space: nowrap; }
.res td:last-child { padding-right: 4px; }
.res td:first-child { text-align: left; border-right: 1px solid #8f8f8f; border-left: 1px solid #8f8f8f; padding-right: 0; }
.res td svg { width: 16px; height: 10px; margin-right: 7px; vertical-align: -1px; }
.res .hot td { background: #f0f0f0; }
.phscroll { height: 16px; background: #f0f0f0; padding: 7px 25px 0 17px; }
.phscroll i { display: block; height: 2px; background: #878787; }
.split { height: 10px; display: flex; align-items: center; justify-content: center; background: #e5e5e5; border: 1px solid #d0d0d0; border-width: 1px 0; }
.split i { width: 20px; height: 3px; background: repeating-linear-gradient(90deg, #fff 0 2px, transparent 2px 4px); }
.links { height: 151px; }
.links li { height: 21px; display: flex; align-items: center; }
.links svg { width: 16px; margin: 0 4px 0 5px; }
.links a { color: #1062d0; text-decoration: none; }
.off { color: #777; }

.status { height: 23px; display: flex; align-items: center; background: #18254a; color: #c0c8da; padding: 0 8px 0 11px; }
.sb.plain { margin-left: 14px; }
.sright { margin-left: auto; display: flex; align-items: center; }
.sb { display: flex; align-items: center; gap: 3px; margin-right: 10px; }
.sb.lit { color: #fff; }
.sb:disabled { color: #8d96ad; }
```
FILE: app.js
```js
// Link chart ---------------------------------------------------------------
// Edge: colour, points, arrow heads (s start, e end, or [tip, from] vertex indices), labels [text, x, y]
const EDGES = [
  ["k", [[190,389],[80,580]], ["s"], [["1",133,486]]],
  ["k", [[204,389],[141,535]], ["s"], [["3",172,462]]],
  ["k", [[207,389],[107,646]], ["s"], [["3",157,519]]],
  ["k", [[222,389],[171,600]], ["s"], [["4",197,496]]],
  ["k", [[230,389],[186,667]], ["s"], [["2",207,529]]],
  ["k", [[233,389],[216,535]], ["s"], [["1",223,462]]],
  ["k", [[246,389],[253,632]], ["s"], [["2",250,512]]],
  ["k", [[255,389],[276,565]], ["s"], [["3",266,477]]],
  ["k", [[86,627],[212,878]], ["e"], [["1",162,787]]],
  ["k", [[114,692],[213,878]], ["e"], [["2",150,752]]],
  ["k", [[141,581],[224,874]], ["e"], [["1",181,728]]],
  ["k", [[173,646],[225,874]], ["e"], [["1",199,761]]],
  ["k", [[187,715],[226,874]], ["e"], [["1",206,794]]],
  ["k", [[215,580],[235,873]], ["e"], [["1",224,728]]],
  ["k", [[250,678],[240,873]], ["e"], [["4",244,776]]],
  ["k", [[272,610],[244,873]], ["e"], [["1",257,743]]],
  ["k", [[292,945],[526,1012]], ["s"], [["1",408,979]]],
  ["k", [[560,1009],[780,939]], ["e"], [["2",668,974]]],
  ["k", [[838,389],[833,865]], ["e"], [["18",835,628]]],
  ["k", [[789,390],[660,642]], ["s"], [["1",723,515]]],
  ["k", [[792,390],[641,707]], ["s","e"], [["1",715,549]]],
  ["k", [[564,505],[561,479],[772,321],[795,331]], [[2,1]], [["2",666,400]]],
  ["k", [[564,505],[795,331]], ["e"], [["1",678,419]]],
  ["k", [[299,375],[303,357],[328,352],[532,574]], [], []],
  ["k", [[303,357],[794,880]], ["e"], []],
  ["k", [[300,387],[769,885],[794,880]], [[0,1]], [["1",531,635]]],
  ["k", [[603,645],[801,856],[794,880]], [[1,0]], []],
  ["k", [[271,883],[262,859],[496,548],[522,549],[527,563]], [[1,2]], [["6",378,703]]],
  ["k", [[271,883],[522,549],[532,574]], [], [["3",396,717]]],
  ["k", [[503,574],[512,562]], [[1,0]], []],
  ["k", [[272,883],[299,885],[532,575]], [[1,2]], [["1",412,729]]],
  ["k", [[286,898],[285,871],[594,667],[618,678],[618,705]], [[2,1]], [["2",438,769]]],
  ["k", [[288,898],[289,877],[618,705]], ["e",[1,2]], [["6",432,801]]],
  ["k", [[286,898],[618,678],[627,713]], [], []],
  ["k", [[287,895],[576,724],[599,739],[597,765]], [], []],
  ["k", [[287,902],[597,741]], ["e","s"], [["3",442,821]]],
  ["k", [[287,902],[321,928],[597,765]], ["e",[1,2]], [["1",452,841]]],
  ["k", [[287,902],[310,916],[459,840]], [], []],
  ["k", [[597,743],[619,731]], [], []],
  ["k", [[295,928],[307,907],[763,901],[776,922]], [[2,1]], [["12",534,905]]],
  ["k", [[295,928],[776,922]], ["e"], [["12",534,926]]],
  ["b", [[296,323],[430,395]], ["s"], [["531",363,360]]],
  ["b", [[296,325],[475,433]], ["e"], [["2",384,378]]],
  ["b", [[786,312],[767,294],[493,375],[486,401]], [[1,2]], [["2",629,335]]],
  ["b", [[486,401],[786,312]], ["e"], [["158",634,358]]],
  ["b", [[787,320],[528,434]], ["e"], [["2",657,377]]],
  ["b", [[283,391],[437,763]], ["s"], [["1",374,615]]],
  ["b", [[288,391],[455,760]], ["s","e"], [["12",369,577]]],
  ["b", [[297,391],[283,413],[477,765]], [], [["16",413,652]]],
  ["b", [[299,391],[490,711]], ["s"], [["18",367,522]]],
  ["b", [[299,391],[502,765]], ["s"], [["3",422,610]]],
  ["b", [[301,391],[510,765]], ["s"], [["23",395,552]]],
  ["b", [[304,385],[551,752]], ["s"], [["154",426,569]]],
  ["b", [[437,453],[261,876]], ["e"], [["154",347,666]]],
  ["b", [[482,481],[266,878]], ["s"], [["3",374,680]]],
  ["b", [[286,897],[480,756]], [], [["2",382,826]]],
  ["b", [[287,899],[443,805]], ["e"], [["83",364,853]]],
  ["b", [[290,904],[507,805]], ["s"], [["5",415,849],["1",391,859]]],
  ["b", [[294,914],[450,872]], [], [["1",370,894]]],
  ["b", [[294,916],[532,861]], ["e"], [["3",412,889]]],
  ["b", [[509,869],[776,912]], ["e"], [["1",641,891]]],
  ["b", [[592,862],[777,907]], ["e"], [["3",683,885]]],
  ["b", [[498,800],[779,901]], ["e"], [["5",664,857]]],
  ["b", [[543,817],[779,900]], [], [["9",636,851]]],
  ["b", [[532,754],[782,894]], ["e"], [["8",656,824]]],
  ["b", [[594,793],[782,894]], [], [["9",671,836]]],
  ["b", [[552,812],[570,795],[682,838],[775,875],[779,901]], [[1,2]], [["39",687,844]]],
  ["b", [[520,780],[546,827]], ["e"], []],
  ["b", [[452,793],[467,836]], [], []],
  ["m", [[289,335],[575,583]], ["s"], [["2",432,459]]],
  ["m", [[303,353],[526,563]], ["s"], [["13",413,457]]],
  ["m", [[303,363],[515,604]], ["e"], [["4",409,484]]],
  ["m", [[780,355],[755,347],[562,537],[570,561]], [[1,2]], [["1",658,442]]],
  ["m", [[570,561],[780,355]], ["e"], [["2",674,457]]],
  ["m", [[563,597],[577,583],[781,361]], [[0,1]], [["1",666,483]]],
  ["m", [[619,581],[780,371]], ["e"], [["2",699,476]]],
  ["m", [[509,627],[278,886]], ["e"], [["136",392,756]]],
  ["m", [[513,649],[279,885]], ["s","e"], [["28",396,769]]],
  ["m", [[529,668],[281,889]], ["e"], [["1",412,770]]],
  ["m", [[587,625],[794,880]], ["e"], [["83",689,752]]],
  ["m", [[631,648],[799,875]], ["e"], [["3",715,762]]],
  ["m", [[557,648],[791,881]], ["s"], [["36",674,765]]],
  ["m", [[794,878],[796,880]], [], [["28",564,604]]]
];
const RINGS = {
  y: ["#ffd21c", "#ffe68e"], r: ["#ff1f1f", "#ff8f8f"], g: ["#00a000", "#80cf80"], l: ["#a6d2ff", "#d2e8ff"],
  b: ["#4a78ff", "#8ba6ff"], m: ["#ff1fff", "#ff70ff"]
};
// Node: name, centre x, centre y, ring, badge, IMSI (main numbers only)
const NODES = [
  ["720625160",245,296,"y",4,"639027241445311"], ["717-641603",840,296,"r",4,"639028750311935"],
  ["728349271",237,928,"g",4,"639027850313030"], ["708594930",832,921,"l",8,"639029800591325"],
  ["544",501,446,"b",6], ["536166617266898",456,409,"b",6],
  ["3045",467,788,"b",6], ["722196466",505,737,"b",6], ["444",568,778,"b",6], ["493",522,799,"b",6],
  ["736166617266898",479,864,"b",6], ["77714340232",561,853,"b",6],
  ["534146415246292",599,605,"m",8], ["3046",535,627,"m",8], ["4d50450924",548,582,"m",8],
  ["702467145",547,520,"",4], ["715496487",652,658,"",4], ["717171933",633,723,"",4], ["496e888",543,1016,"",4],
  ["5407",72,596,"",4], ["5421",135,551,"",4], ["5420",215,551,"",4], ["5426",278,581,"",4],
  ["5429",168,617,"",4], ["5422",101,663,"",4], ["5428",183,684,"",4], ["5424",253,649,"",4]
];

function arrow(kind, tip, from, back) {
  const dx = tip[0] - from[0], dy = tip[1] - from[1], len = Math.hypot(dx, dy) || 1;
  const ux = dx / len, uy = dy / len;
  const x = tip[0] - ux * back, y = tip[1] - uy * back;
  const bx = x - ux * 8, by = y - uy * 8;
  return `<path class="ar-${kind}" d="M${x} ${y}L${bx - uy * 3.5} ${by + ux * 3.5}L${bx + uy * 3.5} ${by - ux * 3.5}Z"/>`;
}
function badge(x, y, n) {
  return `<rect x="${x - 6}" y="${y - 4}" width="12" height="8" rx="4" fill="#fff" stroke="#5b8fd0" stroke-width="1"/><text class="badge" x="${x}" y="${y + 2}">${n}</text>`;
}
let lines = "", tags = "";
for (const [kind, pts, heads, labels] of EDGES) {
  lines += `<polyline class="ln-${kind}" points="${pts.join(" ")}"/>`;
  const last = pts.length - 1;
  for (const h of heads) {
    if (h === "s") lines += arrow(kind, pts[0], pts[1], 12);
    else if (h === "e") lines += arrow(kind, pts[last], pts[last - 1], 12);
    else lines += arrow(kind, pts[h[0]], pts[h[1]], 0);
  }
  for (const [t, x, y] of labels) {
    const w = t.length * 6 + 1;
    tags += `<rect class="plate" x="${x - w / 2}" y="${y - 5}" width="${w}" height="10"/><text x="${x}" y="${y + 4}">${t}</text>`;
  }
}
let shapes = "", names = "";
for (const [name, x, y, ring, n, imsi] of NODES) {
  if (imsi) {
    shapes += `<circle cx="${x}" cy="${y}" r="50" fill="${RINGS[ring][1]}" stroke="${RINGS[ring][0]}" stroke-width="8"/><use href="#sim" x="${x - 30}" y="${y - 17}" width="60" height="35" stroke="none"/>`;
    names += `<text class="lbig" x="${x - 7}" y="${y + 75}">${name}</text>${badge(x + 3 + name.length * 5 + (name.length > 9 ? -1 : 1), y + 68, n)}`;
    names += `<path d="M${x - 55} ${y + 88}H${x - 48}V${y + 84}H${x - 51}V${y + 80}H${x - 52}V${y + 84}H${x - 55}Z" fill="#1f8f8f" stroke="none"/><rect x="${x - 49}" y="${y + 80}" width="4" height="8" fill="#003c3c" stroke="none"/>`;
    names += `<text class="limsi" x="${x - 43}" y="${y + 87}">IMSI:</text><text class="limsi" x="${x - 17}" y="${y + 87}">${imsi}</text>`;
  } else {
    if (ring) shapes += `<circle cx="${x}" cy="${y}" r="24" fill="${RINGS[ring][1]}" fill-opacity=".8" stroke="${RINGS[ring][0]}" stroke-width="5"/>`;
    shapes += `<use href="#sim" x="${x - 15}" y="${y - 9}" width="30" height="18" stroke="none"/>`;
    const ly = y + (ring ? 35 : 22), w = name.length * 5.6;
    names += `<rect class="plate" x="${x - 7 - w / 2}" y="${ly - 6}" width="${w + 3}" height="12"/><text x="${x - 6}" y="${ly + 4}">${name}</text>${badge(x + 4 + w / 2, ly, n)}`;
  }
}
document.getElementById("graph").innerHTML = lines + tags + shapes + names;

// Time wheel ---------------------------------------------------------------
// One string per hour; digits run from Sunday (outer ring) to Monday (inner ring)
const HOURS = ["1011000","1100000","1000000","0001000","0001001","0000000","1111111","1133111","3426312","4622111","6345444","4445435",
  "4841333","3632222","2424353","3762523","5764351","2534545","6834422","6645454","6667875","5636487","2613335","1211201"];
const SHADES = ["#fff","#dbe4f0","#b9cae3","#98b2d6","#769bc8","#5382bd","#3e6ca5","#30557f","#243f5e"];
const DAYS = ["Sun","Sat","Fri","Thu","Wed","Tue","Mon"];
const R = 217, R0 = 39, STEP = (R - R0) / 7;
const at = (r, deg) => { const a = (deg - 90) * Math.PI / 180; return (r * Math.cos(a)).toFixed(1) + " " + (r * Math.sin(a)).toFixed(1); };
let wheel = "";
HOURS.forEach((row, h) => {
  const a = h * 15 - 7.5, b = a + 15;
  [...row].forEach((v, i) => {
    const o = R - i * STEP, n = o - STEP;
    wheel += `<path class="cell" fill="${SHADES[v]}" d="M${at(o, a)}A${o} ${o} 0 0 1 ${at(o, b)}L${at(n, b)}A${n} ${n} 0 0 0 ${at(n, a)}Z"/>`;
  });
});
HOURS.forEach((row, h) => {
  const a = h * Math.PI / 12, pole = h % 12 === 0;
  const x = Math.round(232 * Math.sin(a)) + (pole ? -1 : h > 12 ? -5 : 2);
  const y = Math.round(-(pole ? 235 : 229) * Math.cos(a));
  wheel += `<text class="hour" x="${x}" y="${y + 4}">${h}</text>`;
});
DAYS.forEach((d, i) => {
  const y = Math.round(-R + (i + .5) * STEP);
  wheel += `<ellipse cx="-3" cy="${y}" rx="16" ry="10" fill="url(#glow)" stroke="none"/><text x="-3" y="${y + 3}">${d}</text>`;
});
document.getElementById("wheelplot").innerHTML = wheel;

// Results table ------------------------------------------------------------
const RESULTS = `728349271 49.5175 92.857 123.077 5
720625160 27.0498 74.286 88.462 5
708594930 8.4437 66.667 65.385 5
717-641603 3.4788 50.980 46.154 5
702467145 0.5455 50.980 19.231 5
5361666172... 0.4647 53.061 15.385 4
4d50450924 0.4647 54.167 19.231 5
715496487 0.3636 50.980 19.231 5
717171933 0.2727 50.980 15.385 4
5341464152... 0.2536 54.167 15.385 4
544 0.2536 53.061 11.538 3
3046 0.2536 54.167 15.385 4
493 0.0851 53.061 19.231 5
444 0.0425 53.061 11.538 3
5428 0.0425 50.980 7.692 2
5420 0.0425 50.980 7.692 2
722196466 0.0425 53.061 11.538 3
5421 0.0425 50.980 7.692 2
7361666172... 0.0425 53.061 11.538 3
5422 0.0425 50.980 7.692 2
3045 0.0425 53.061 11.538 3
5429 0.0425 50.980 7.692 2
77714340232 0.0425 53.061 11.538 3
5426 0.0425 50.980 7.692 2
5424 0.0425 50.980 7.692 2
5407 0.0425 50.980 7.692 2
496e888 0.0000 52.000 7.692 2`;
document.getElementById("rows").innerHTML = RESULTS.split("\n").map((line, i) => {
  const [name, ...nums] = line.split(" ");
  return `<tr${i === 1 ? ' class="hot"' : ""}><td><svg><use href="#sim"/></svg>${name}</td>${nums.map(n => `<td>${n}</td>`).join("")}</tr>`;
}).join("");
```
